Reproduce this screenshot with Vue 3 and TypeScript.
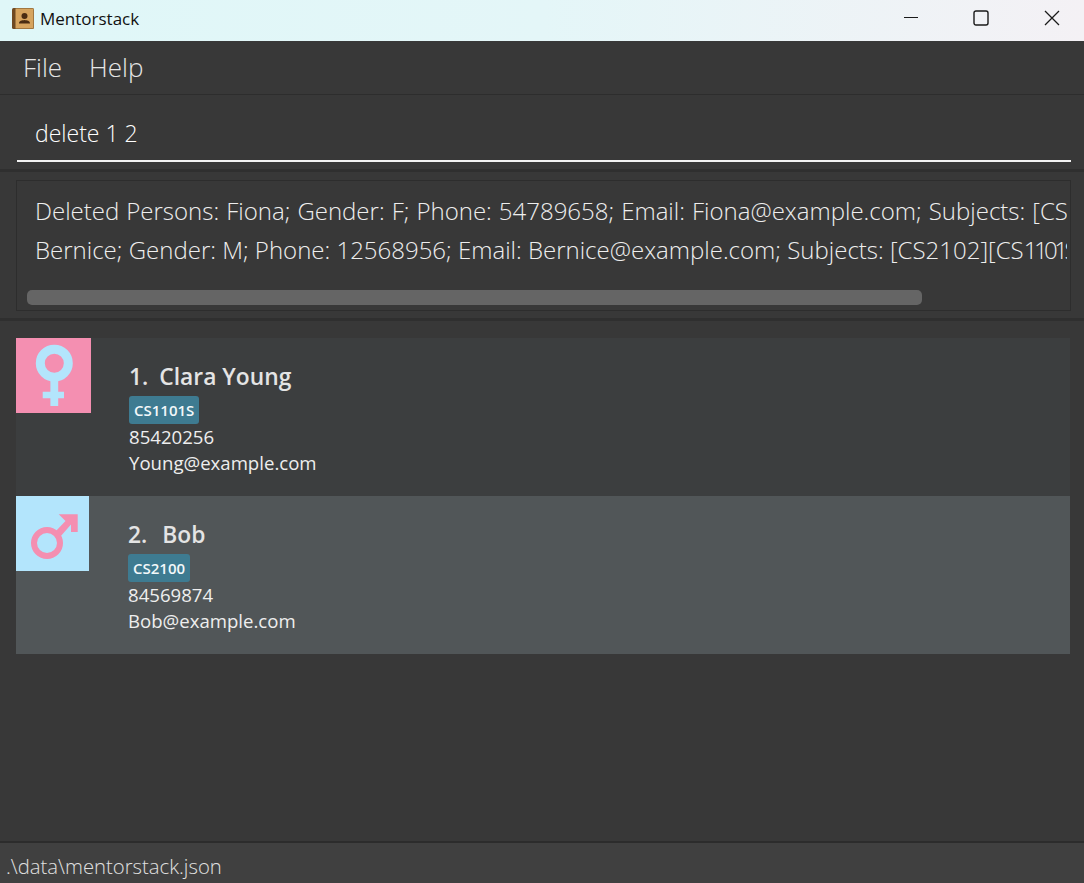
<script setup lang="ts">
const people = [
  { id: 1, name: 'Clara Young', subject: 'CS1101S', phone: '85420256', email: 'Young@example.com', gender: 'f' },
  { id: 2, name: 'Bob', subject: 'CS2100', phone: '84569874', email: 'Bob@example.com', gender: 'm' },
]
</script>

<template>
  <div class="window">
    <header class="titlebar">
      <svg class="app-icon" viewBox="0 0 22 21" width="22" height="21">
        <rect x="0" y="0" width="22" height="21" rx="1.5" fill="#6f4a22" />
        <rect x="3.5" y="0.5" width="18" height="20" fill="#d6a45e" />
        <circle cx="12.5" cy="8" r="3" fill="#4a2c12" />
        <path d="M7 15.5 C7 12.5 10 12.5 12.5 12 C15 12.5 18 12.5 18 15.5 Z" fill="#4a2c12" />
      </svg>
      <span class="app-name">Mentorstack</span>
      <div class="controls">
        <svg viewBox="0 0 16 16" width="16" height="16"><path d="M2 7.5H17" stroke="#1a1a1a" fill="none" /></svg>
        <svg viewBox="0 0 16 16" width="16" height="16"><rect x="1" y="1" width="14" height="14" rx="2" stroke="#1a1a1a" stroke-width="1.4" fill="none" /></svg>
        <svg viewBox="0 0 16 16" width="16" height="16"><path d="M1 1L15 15M15 1L1 15" stroke="#1a1a1a" stroke-width="1.3" fill="none" /></svg>
      </div>
    </header>

    <nav class="menu">
      <span>File</span>
      <span>Help</span>
    </nav>

    <section class="command">
      <div class="command-input">delete 1 2</div>
    </section>

    <section class="result">
      <div class="result-box">
        <p class="first">Deleted Persons: Fiona; Gender: F; Phone: 54789658; Email: Fiona@example.com; Subjects: [CS</p>
        <p>Bernice; Gender: M; Phone: 12568956; Email: Bernice@example.com; Subjects: [CS2102][CS<span class="narrow">1101</span>S]</p>
        <div class="scroll-thumb"></div>
      </div>
    </section>

    <main class="list">
      <article v-for="p in people" :key="p.id" class="card" :class="{ selected: p.gender === 'm' }">
        <div class="avatar" :class="p.gender">
          <svg v-if="p.gender === 'f'" viewBox="0 0 75 75" width="75" height="75">
            <circle cx="38.3" cy="25.2" r="14" fill="none" stroke="#b3e5fc" stroke-width="9" />
            <path d="M34.4 41H42.2V68H34.4Z M26.7 53.7H48V60.3H26.7Z" fill="#b3e5fc" />
          </svg>
          <svg v-else viewBox="0 0 73 75" width="73" height="75">
            <circle cx="31" cy="47" r="13" fill="none" stroke="#f48fb1" stroke-width="6" />
            <path d="M42.7 18.3H61.7V36H55V28.5L44 41L39 36L49.5 25Z" fill="#f48fb1" />
          </svg>
        </div>
        <div class="details">
          <div class="name"><span class="index">{{ p.id }}.</span>{{ p.name }}</div>
          <div class="tag">{{ p.subject }}</div>
          <div class="line">{{ p.phone }}</div>
          <div class="line">{{ p.email }}</div>
        </div>
      </article>
    </main>

    <footer class="status">.\data\mentorstack.json</footer>
  </div>
</template>

<style>
html, body {
  margin: 0;
  background: #383838;
}
</style>

<style scoped>
.window {
  width: 1084px;
  height: 883px;
  display: flex;
  flex-direction: column;
  overflow: hidden;
  background: #383838;
  color: #fff;
  font-family: "Open Sans", "Noto Sans", sans-serif;
  font-weight: 300;
}

.titlebar {
  height: 41px;
  flex: none;
  box-sizing: border-box;
  display: flex;
  align-items: center;
  padding: 0 0 5px 12px;
  background: linear-gradient(90deg, #dff7f8 0%, #e4f6f8 50%, #f4f1f5 100%);
  color: #111;
}

.app-icon {
  margin-right: 6px;
}

.app-name {
  font-size: 17px;
  font-weight: 400;
}

.controls {
  margin-left: auto;
  margin-right: 24px;
  display: flex;
  gap: 55px;
}

.menu {
  height: 54px;
  flex: none;
  box-sizing: border-box;
  display: flex;
  align-items: center;
  gap: 27px;
  padding: 0 23px 2px;
  font-size: 26px;
  color: #e6e6e6;
  border-bottom: 1px solid #2d2d2d;
}

.command {
  height: 77px;
  flex: none;
  box-sizing: border-box;
  padding: 0 13px 0 17px;
  border-bottom: 3px solid #2f2f2f;
}

.command-input {
  height: 67px;
  box-sizing: border-box;
  padding: 23px 0 0 18px;
  font-size: 23px;
  line-height: 30px;
  border-bottom: 2px solid #f2f2f2;
}

.result {
  height: 149px;
  flex: none;
  box-sizing: border-box;
  padding: 8px 13px 0 16px;
  border-bottom: 3px solid #2f2f2f;
}

.result-box {
  height: 131px;
  box-sizing: border-box;
  padding: 10px 0 0 18px;
  border: 1px solid #2d2d2d;
  overflow: hidden;
}

.result-box p {
  margin: 0 3px 0 0;
  height: 39px;
  line-height: 39px;
  font-size: 24px;
  white-space: nowrap;
  overflow: hidden;
  color: #eee;
}

.result-box p.first {
  word-spacing: 0.8px;
}

.narrow {
  letter-spacing: -3.5px;
}

.scroll-thumb {
  width: 895px;
  height: 15px;
  margin: 21px 0 0 -8px;
  border-radius: 5px;
  background: #656565;
}

.list {
  flex: 1;
  padding: 17px 14px 0 16px;
}

.card {
  height: 158px;
  display: flex;
  background: #3c3e3f;
}

.card.selected {
  background: #515658;
}

.avatar {
  flex: none;
  width: 75px;
  height: 75px;
}

.avatar svg {
  display: block;
}

.avatar.f {
  background: #f48fb1;
}

.avatar.m {
  width: 73px;
  background: #b3e5fc;
}

.details {
  padding: 21px 0 0 38px;
  color: #eee;
  font-weight: 400;
}

.selected .details {
  padding-left: 39px;
}

.name {
  height: 35px;
  margin-bottom: 2px;
  line-height: 35px;
  font-size: 22.8px;
  font-weight: 600;
  color: #e4e4e4;
}

.index {
  display: inline-block;
  margin-right: 11px;
}

.selected .index {
  margin-right: 15px;
}

.tag {
  width: fit-content;
  height: 28px;
  padding: 0 5px;
  box-sizing: border-box;
  border-radius: 3px;
  background: #3e7b91;
  color: #f2f8fa;
  font-size: 15px;
  font-weight: 600;
  line-height: 28px;
}

.line {
  height: 26px;
  line-height: 26px;
  font-size: 18.6px;
}

.status {
  height: 42px;
  flex: none;
  box-sizing: border-box;
  padding-left: 6px;
  line-height: 46px;
  font-size: 20.3px;
  color: #e0e0e0;
  background: #404040;
  border-top: 2px solid #2c2c2c;
}
</style>
